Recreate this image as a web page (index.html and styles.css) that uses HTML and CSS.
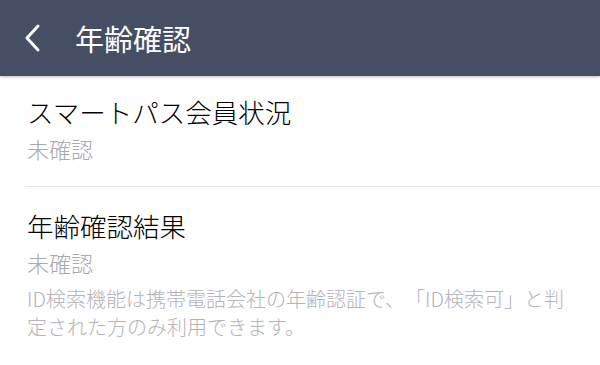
FILE: index.html
```html
<!DOCTYPE html>
<html lang="ja">
<head>
<meta charset="utf-8">
<link rel="stylesheet" href="styles.css">
</head>
<body>
<div class="app">
  <header class="bar">
    <span class="back">
      <svg width="20" height="30" viewBox="0 0 20 30"><path d="M15 3 L4 15 L15 27" fill="none" stroke="#fff" stroke-width="3" stroke-linecap="round" stroke-linejoin="round"/></svg>
    </span>
    <h1 class="title">年齢確認</h1>
  </header>
  <section class="row first">
    <div class="label">スマートパス会員状況</div>
    <div class="value">未確認</div>
  </section>
  <section class="row">
    <div class="label">年齢確認結果</div>
    <div class="value">未確認</div>
    <p class="note">ID検索機能は携帯電話会社の年齢認証で、「ID検索可」と判定された方のみ利用できます。</p>
  </section>
</div>
</body>
</html>
```
FILE: styles.css
```css
* { box-sizing: border-box; }
html, body { margin: 0; padding: 0; background: #fff; }
body {
  font-family: "Noto Sans CJK JP", "Noto Sans", sans-serif;
  font-weight: 300;
  text-spacing-trim: space-all;
  width: 600px; height: 365px; overflow: hidden;
}
.bar {
  height: 76px;
  background: #464e63;
  display: flex;
  align-items: center;
  padding-left: 23px;
  box-shadow: 0 1px 3px rgba(0,0,0,0.25);
  position: relative;
}
.back { display: flex; width: 20px; height: 30px; margin-right: 32px; }
.title { margin: 0; color: #fff; font-size: 29px; font-weight: 400; line-height: 1; }
.row { margin-left: 25px; padding-left: 2px; }
.row.first { padding-top: 18px; padding-bottom: 22px; border-bottom: 1px solid #e6e6e6; }
.row + .row { padding-top: 21px; }
.label { font-size: 26.5px; font-weight: 300; color: #000; line-height: 36px; }
.value { font-size: 22px; color: #a9a9ad; line-height: 32px; margin-top: 2px; }
.note { margin: 7px 0 0; font-size: 20px; color: #b4b4b8; line-height: 28px; width: 548px; }
```
